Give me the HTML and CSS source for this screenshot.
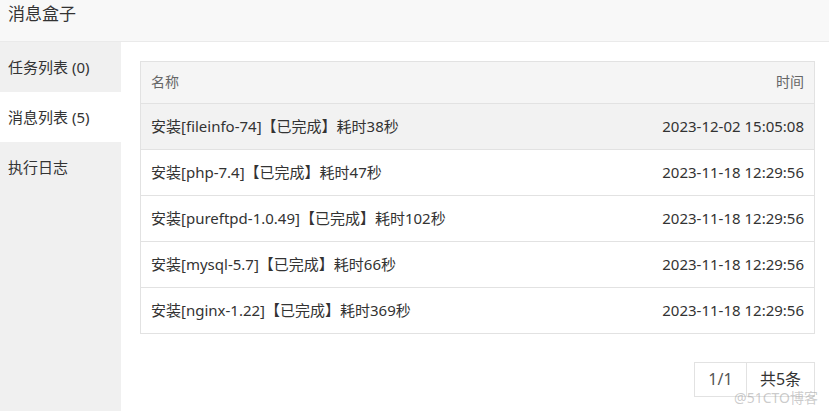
FILE: index.html
```html
<!DOCTYPE html>
<html lang="zh">
<head>
<meta charset="utf-8">
<title>消息盒子</title>
<link rel="stylesheet" href="styles.css">
</head>
<body>
<div class="box">
  <div class="title">消息盒子</div>
  <div class="main">
    <ul class="side">
      <li class="tab">任务列表 (0)</li>
      <li class="tab active">消息列表 (5)</li>
      <li class="tab">执行日志</li>
    </ul>
    <div class="content">
      <table class="list">
        <thead>
          <tr><th>名称</th><th class="r">时间</th></tr>
        </thead>
        <tbody>
          <tr class="hover"><td>安装[fileinfo-74]【已完成】耗时38秒</td><td class="r">2023-12-02 15:05:08</td></tr>
          <tr><td>安装[php-7.4]【已完成】耗时47秒</td><td class="r">2023-11-18 12:29:56</td></tr>
          <tr><td>安装[pureftpd-1.0.49]【已完成】耗时102秒</td><td class="r">2023-11-18 12:29:56</td></tr>
          <tr><td>安装[mysql-5.7]【已完成】耗时66秒</td><td class="r">2023-11-18 12:29:56</td></tr>
          <tr><td>安装[nginx-1.22]【已完成】耗时369秒</td><td class="r">2023-11-18 12:29:56</td></tr>
        </tbody>
      </table>
      <div class="pager">
        <span class="pg">1/1</span><span class="pg total">共5条</span>
      </div>
    </div>
  </div>
  <div class="wm">@51CTO博客</div>
</div>
</body>
</html>
```

FILE: styles.css
```css
* { box-sizing: border-box; }
html, body { margin: 0; padding: 0; }
body {
  width: 829px;
  height: 411px;
  overflow: hidden;
  background: #fff;
  font-family: "Noto Sans", "Noto Sans CJK SC", sans-serif;
  font-size: 15px;
  color: #333;
}
.box { position: relative; height: 411px; display: flex; flex-direction: column; }
.title {
  height: 42px;
  line-height: 28px;
  padding: 0 8px;
  font-size: 17px;
  color: #333;
  background: #f8f8f8;
  border-bottom: 1px solid #eaeaea;
}
.main { flex: 1; display: flex; }
.side {
  list-style: none;
  margin: 0;
  padding: 0;
  width: 121px;
  background: #f0f0f0;
}
.tab {
  height: 50px;
  line-height: 50px;
  padding-left: 8px;
  color: #333;
}
.tab.active { background: #fff; }
.content {
  flex: 1;
  padding: 19px 14px 0 19px;
}
.list {
  width: 100%;
  border-collapse: collapse;
  border: 1px solid #e2e2e2;
}
.list th, .list td {
  text-align: left;
  padding: 0 10px;
  border-top: 1px solid #e2e2e2;
  white-space: nowrap;
}
.list th {
  height: 42px;
  font-weight: normal;
  color: #666;
  background: #f5f5f5;
  font-size: 14px;
  padding-bottom: 3px;
}
.list td { height: 46px; color: #333; padding-bottom: 2px; }
.list .r { text-align: right; }
.list tr.hover td { background: #f2f2f2; }
.pager {
  display: flex;
  justify-content: flex-end;
  margin-top: 28px;
}
.pg {
  height: 35px;
  line-height: 33px;
  border: 1px solid #e2e2e2;
  font-size: 16px;
  color: #333;
}
.pg:first-child { width: 53px; text-align: center; color: #555; }
.pg.total { border-left: none; width: 68px; text-align: center; }
.wm {
  position: absolute;
  right: 11px;
  bottom: 4px;
  font-size: 14px;
  color: rgba(160, 160, 160, 0.55);
}
```
